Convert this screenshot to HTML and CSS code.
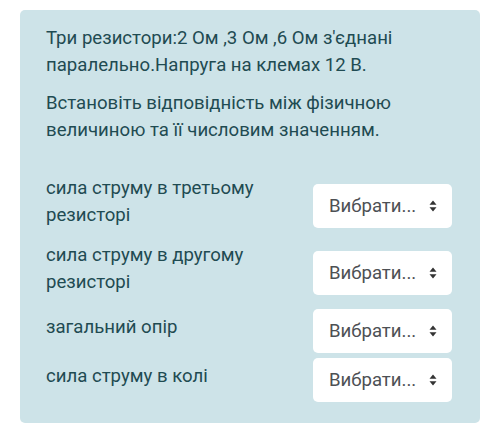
FILE: index.html
```html
<!DOCTYPE html>
<html lang="uk">

<head>
  <meta charset="UTF-8">
  <title>Питання</title>
  <link rel="stylesheet" href="styles.css">
</head>

<body>
  <div class="formulation">
    <div class="qtext">
      <p>Три резистори:2 Ом ,3 Ом ,6 Ом з'єднані паралельно.Напруга на клемах 12 В.</p>
      <p>Встановіть відповідність між фізичною величиною та її числовим значенням.</p>
    </div>
    <div class="answer">
      <div class="row">
        <div class="text">сила струму в третьому резисторі</div>
        <div class="select">
          <span>Вибрати...</span>
          <svg width="8" height="12" viewBox="0 0 8 12"><path d="M4 0.5L7.5 4.8H0.5Z M4 11.5L7.5 7.2H0.5Z" fill="#333"/></svg>
        </div>
      </div>
      <div class="row">
        <div class="text">сила струму в другому резисторі</div>
        <div class="select">
          <span>Вибрати...</span>
          <svg width="8" height="12" viewBox="0 0 8 12"><path d="M4 0.5L7.5 4.8H0.5Z M4 11.5L7.5 7.2H0.5Z" fill="#333"/></svg>
        </div>
      </div>
      <div class="row">
        <div class="text">загальний опір</div>
        <div class="select">
          <span>Вибрати...</span>
          <svg width="8" height="12" viewBox="0 0 8 12"><path d="M4 0.5L7.5 4.8H0.5Z M4 11.5L7.5 7.2H0.5Z" fill="#333"/></svg>
        </div>
      </div>
      <div class="row">
        <div class="text">сила струму в колі</div>
        <div class="select">
          <span>Вибрати...</span>
          <svg width="8" height="12" viewBox="0 0 8 12"><path d="M4 0.5L7.5 4.8H0.5Z M4 11.5L7.5 7.2H0.5Z" fill="#333"/></svg>
        </div>
      </div>
    </div>
  </div>
</body>

</html>
```

FILE: styles.css
```css
* {
  margin: 0;
  padding: 0;
  box-sizing: border-box;
}

body {
  background: #fff;
  font-family: Roboto, "Noto Sans", sans-serif;
  font-size: 18.6px;
  line-height: 27px;
  color: #1f4b52;
  padding: 10px 20px 11px;
}

.formulation {
  background: #cde3e8;
  border-radius: 5px;
  padding: 15px 28px 21px 26px;
}

.qtext p {
  margin-bottom: 11px;
}

.qtext p:last-child {
  margin-bottom: 31px;
}

.answer {
  display: flex;
  flex-direction: column;
  gap: 5px;
}

.row {
  display: flex;
  align-items: center;
  gap: 12px;
}

.text {
  flex: 1;
  padding-bottom: 8px;
}

.select {
  width: 139px;
  height: 44px;
  flex-shrink: 0;
  background: #fff;
  border-radius: 5px;
  display: flex;
  align-items: center;
  justify-content: space-between;
  padding: 0 15px 0 16px;
  color: #4d5054;
}
```
